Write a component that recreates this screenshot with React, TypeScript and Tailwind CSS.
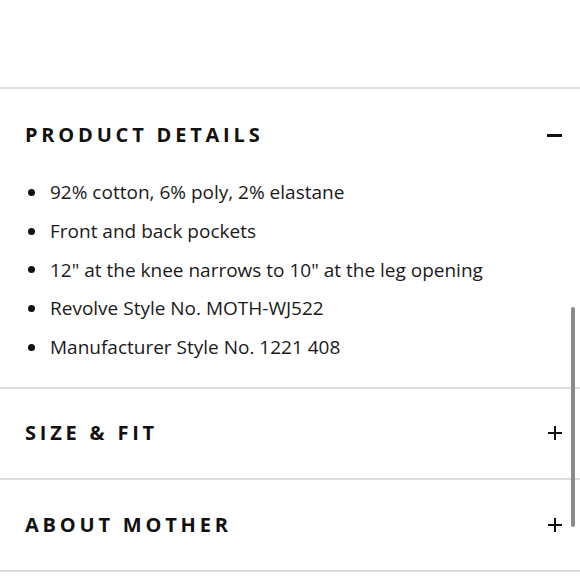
const DETAILS = [
  '92% cotton, 6% poly, 2% elastane',
  'Front and back pockets',
  '12" at the knee narrows to 10" at the leg opening',
  'Revolve Style No. MOTH-WJ522',
  'Manufacturer Style No. 1221 408',
];

function Minus() {
  return <span className="block h-[3px] w-[15px] bg-[#111]" />;
}

function Plus() {
  return (
    <span className="relative block h-[14px] w-[14px]">
      <span className="absolute left-0 top-[6px] h-[2px] w-[14px] bg-[#111]" />
      <span className="absolute left-[6px] top-0 h-[14px] w-[2px] bg-[#111]" />
    </span>
  );
}

function Header({ title, open }: { title: string; open?: boolean }) {
  return (
    <div className="flex h-[24px] items-center justify-between pl-[25px] pr-[18px]">
      <h2 className="text-[20px] font-bold uppercase leading-none tracking-[0.19em] text-[#111]">
        {title}
      </h2>
      {open ? <Minus /> : <Plus />}
    </div>
  );
}

export default function App() {
  return (
    <div
      className="relative h-[580px] w-[580px] overflow-hidden bg-white text-[#1a1a1a]"
      style={{ fontFamily: '"Open Sans", "Liberation Sans", sans-serif' }}
    >
      <div className="h-[87px]" />

      {/* Product details (open) */}
      <section className="border-t-2 border-[#dedede] pb-[20px] pt-[34px]">
        <Header title="Product Details" open />
        <ul className="mt-[26px]">
          {DETAILS.map((d) => (
            <li key={d} className="flex h-[38.75px] items-center">
              <span className="ml-[28px] mr-[15px] h-[7px] w-[7px] rounded-full bg-[#111]" />
              <span className="text-[19px] text-[#1a1a1a]">{d}</span>
            </li>
          ))}
        </ul>
      </section>

      <section className="border-t-2 border-[#dedede] pb-[33px] pt-[32px]">
        <Header title="Size & Fit" />
      </section>

      <section className="border-t-2 border-[#dedede] py-[33px]">
        <Header title="About Mother" />
      </section>
      <div className="border-t-2 border-[#dedede]" />

      {/* scrollbar thumb */}
      <div className="absolute left-[571px] top-[307px] h-[220px] w-[4px] rounded-full bg-[#8a8a8a]" />
    </div>
  );
}
